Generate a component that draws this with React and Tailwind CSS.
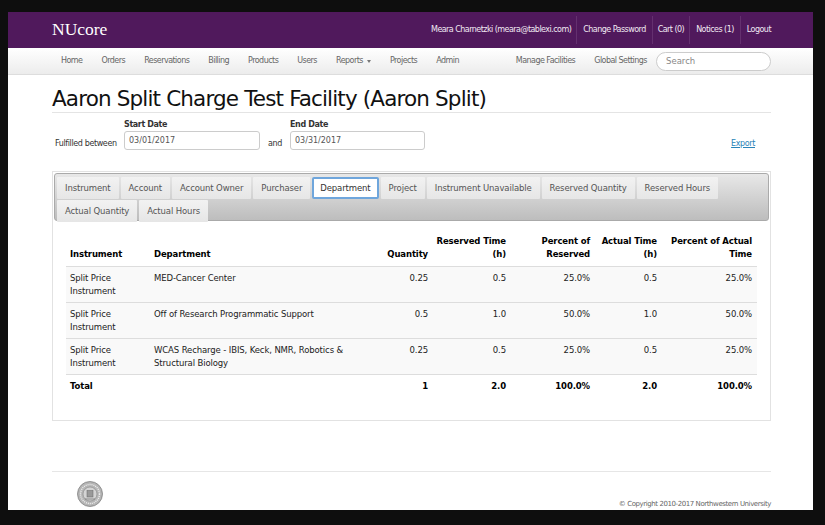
const navLeft = ['Home', 'Orders', 'Reservations', 'Billing', 'Products', 'Users'];
const tabsRowOne = [
  'Instrument',
  'Account',
  'Account Owner',
  'Purchaser',
  'Department',
  'Project',
  'Instrument Unavailable',
  'Reserved Quantity',
  'Reserved Hours',
];
const tabsRowTwo = ['Actual Quantity', 'Actual Hours'];
const rows = [
  { dept: 'MED-Cancer Center', qty: '0.25', res: '0.5', pctRes: '25.0%', act: '0.5', pctAct: '25.0%' },
  { dept: 'Off of Research Programmatic Support', qty: '0.5', res: '1.0', pctRes: '50.0%', act: '1.0', pctAct: '50.0%' },
  {
    dept: 'WCAS Recharge - IBIS, Keck, NMR, Robotics & Structural Biology',
    qty: '0.25',
    res: '0.5',
    pctRes: '25.0%',
    act: '0.5',
    pctAct: '25.0%',
  },
];

const Tab = ({ label }) => {
  if (label === 'Department') {
    return (
      <div className="h-[22px] px-[6px] flex items-center bg-white border-2 border-[#6fa6dc] rounded-[2px] text-[#333]">
        {label}
      </div>
    );
  }
  return (
    <div className="h-[22px] px-[8px] flex items-center bg-gradient-to-b from-[#f2f2f2] to-[#e6e6e6] rounded-[1px] text-[#555]">
      {label}
    </div>
  );
};

const Seal = () => (
  <svg width="26" height="26" viewBox="0 0 26 26">
    <circle cx="13" cy="13" r="12.5" fill="#b5b5b5" stroke="#777" strokeWidth="0.7" />
    <circle cx="13" cy="13" r="9.5" fill="none" stroke="#eee" strokeWidth="1.4" strokeDasharray="1 1" />
    <circle cx="13" cy="13" r="7" fill="#d4d4d4" stroke="#777" strokeWidth="0.5" />
    <rect x="10" y="9.5" width="6" height="6.5" fill="#999" stroke="#666" strokeWidth="0.5" />
    <path d="M8 18h10" stroke="#777" strokeWidth="0.8" />
  </svg>
);

export default function App() {
  return (
    <div className="w-[825px] h-[525px] overflow-hidden bg-[#0e0e0e] pt-[12px] pl-[8px] font-['Liberation_Sans',sans-serif]">
      <div className="w-[805px] h-[498px] bg-white flex flex-col">
        <header className="h-[36px] shrink-0 bg-[#50195c] pl-[44px] pr-[42px] flex items-center justify-between text-white">
          <div className="text-[17.5px] font-['Liberation_Serif',serif] pb-[1px]">NUcore</div>
          <div className="flex items-center h-[28px] text-[8px] font-['DejaVu_Sans',sans-serif] tracking-[-0.54px] text-[#f1e9f3] whitespace-nowrap">
            <span className="pr-[5px] h-full flex items-center border-r border-[#64306f]">Meara Charnetzki (meara@tablexi.com)</span>
            <span className="px-[6px] h-full flex items-center border-r border-[#64306f]">Change Password</span>
            <span className="px-[5px] h-full flex items-center border-r border-[#64306f]">Cart (0)</span>
            <span className="px-[6px] h-full flex items-center border-r border-[#64306f]">Notices (1)</span>
            <span className="pl-[6px] h-full flex items-center">Logout</span>
          </div>
        </header>

        <nav className="h-[27px] shrink-0 bg-gradient-to-b from-white to-[#ececec] border-b border-[#ddd] pl-[53px] pr-[42px] flex items-center text-[8px] font-['DejaVu_Sans',sans-serif] tracking-[-0.54px] text-[#666] whitespace-nowrap">
          <div className="flex items-center gap-[19px]">
            {navLeft.map((item) => (
              <span key={item}>{item}</span>
            ))}
            <span className="flex items-center gap-[4px]">
              Reports
              <span className="w-0 h-0 border-x-[2.5px] border-x-transparent border-t-[3px] border-t-[#777]" />
            </span>
            <span>Projects</span>
            <span>Admin</span>
          </div>
          <div className="ml-auto flex items-center gap-[19px]">
            <span>Manage Facilities</span>
            <span>Global Settings</span>
            <div className="-ml-[10px] w-[115px] h-[19px] border border-[#ccc] rounded-full bg-white pl-[9px] flex items-center text-[8.5px] tracking-normal text-[#888]">
              Search
            </div>
          </div>
        </nav>

        <main className="flex-1 pl-[44px] pr-[42px] flex flex-col">
          <h1 className="mt-[11px] h-[26px] leading-[26px] text-[21.5px] font-['DejaVu_Sans',sans-serif] tracking-[-0.85px] text-[#111] whitespace-nowrap">
            Aaron Split Charge Test Facility (Aaron Split)
          </h1>
          <div className="h-px bg-[#e4e4e4]" />

          <div className="mt-[6px] h-[31px] flex items-end text-[8px] font-['DejaVu_Sans',sans-serif] tracking-[-0.38px] text-[#333] whitespace-nowrap">
            <span className="w-[72px] pl-[3px]">Fulfilled between</span>
            <div className="flex flex-col w-[136px]">
              <span className="font-bold h-[11px] leading-[9px]">Start Date</span>
              <div className="h-[19px] border border-[#ccc] rounded-[3px] pl-[4px] flex items-center tracking-normal text-[#555]">03/01/2017</div>
            </div>
            <span className="w-[30px] text-center">and</span>
            <div className="flex flex-col w-[135px]">
              <span className="font-bold h-[11px] leading-[9px]">End Date</span>
              <div className="h-[19px] border border-[#ccc] rounded-[3px] pl-[4px] flex items-center tracking-normal text-[#555]">03/31/2017</div>
            </div>
            <span className="ml-auto mr-[16px] text-[#2a84b8] underline">Export</span>
          </div>

          <section className="mt-[21px] h-[250px] border border-[#e2e2e2] p-[1px]">
            <div className="h-[48px] rounded-[3px] border border-[#aaa] bg-gradient-to-b from-[#e8e8e8] to-[#bdbdbd] px-[2px] pt-[3px] flex flex-col gap-[1px] text-[8.5px] font-['DejaVu_Sans',sans-serif] tracking-[-0.12px]">
              <div className="flex gap-[2px]">
                {tabsRowOne.map((tab) => (
                  <Tab key={tab} label={tab} />
                ))}
              </div>
              <div className="flex gap-[2px]">
                {tabsRowTwo.map((tab) => (
                  <Tab key={tab} label={tab} />
                ))}
              </div>
            </div>

            <table className="ml-[12px] mt-[14px] w-[691px] table-fixed border-collapse text-[8.5px] leading-[13px] font-['DejaVu_Sans',sans-serif] tracking-[-0.12px] text-[#222]">
              <colgroup>
                <col className="w-[84px]" />
                <col className="w-[233px]" />
                <col className="w-[49px]" />
                <col className="w-[78px]" />
                <col className="w-[84px]" />
                <col className="w-[67px]" />
                <col className="w-[96px]" />
              </colgroup>
              <thead>
                <tr className="h-[31px] border-b border-[#ddd] font-bold text-black align-bottom">
                  <th className="px-[4px] pb-[5px] text-left">Instrument</th>
                  <th className="px-[4px] pb-[5px] text-left">Department</th>
                  <th className="pl-0 pr-[4px] pb-[5px] text-right">Quantity</th>
                  <th className="px-[4px] pb-[5px] text-right">Reserved Time (h)</th>
                  <th className="pl-[16px] pr-[4px] pb-[5px] text-right">Percent of Reserved</th>
                  <th className="pl-0 pr-[4px] pb-[5px] text-right">Actual Time (h)</th>
                  <th className="pl-[6px] pr-[5px] pb-[5px] text-right">Percent of Actual Time</th>
                </tr>
              </thead>
              <tbody>
                {rows.map((r) => (
                  <tr key={r.dept} className="h-[36px] border-b border-[#ddd] bg-[#f9f9f9] align-top">
                    <td className="px-[4px] pt-[5px]">Split Price Instrument</td>
                    <td className="px-[4px] pt-[5px] pr-[24px]">{r.dept}</td>
                    <td className="px-[4px] pt-[5px] text-right">{r.qty}</td>
                    <td className="px-[4px] pt-[5px] text-right">{r.res}</td>
                    <td className="px-[4px] pt-[5px] text-right">{r.pctRes}</td>
                    <td className="px-[4px] pt-[5px] text-right">{r.act}</td>
                    <td className="pr-[5px] pt-[5px] text-right">{r.pctAct}</td>
                  </tr>
                ))}
                <tr className="h-[23px] font-bold text-black align-middle">
                  <td className="px-[4px]">Total</td>
                  <td />
                  <td className="px-[4px] text-right">1</td>
                  <td className="px-[4px] text-right">2.0</td>
                  <td className="px-[4px] text-right">100.0%</td>
                  <td className="px-[4px] text-right">2.0</td>
                  <td className="pr-[5px] text-right">100.0%</td>
                </tr>
              </tbody>
            </table>
          </section>

          <footer className="mt-[50px] border-t border-[#e6e6e6] flex justify-between pl-[25px] pt-[9px]">
            <Seal />
            <span className="self-end -mb-[2px] text-[7px] font-['DejaVu_Sans',sans-serif] tracking-[-0.42px] text-[#666] whitespace-nowrap">
              © Copyright 2010-2017 Northwestern University
            </span>
          </footer>
        </main>
      </div>
    </div>
  );
}
